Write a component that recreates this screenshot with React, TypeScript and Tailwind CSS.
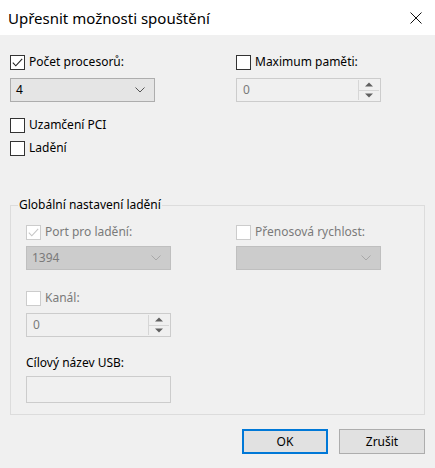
import React from "react";

function Check({ checked = false, disabled = false }: { checked?: boolean; disabled?: boolean }) {
  return (
    <span
      className={`w-[15px] h-[15px] border ${disabled ? "border-[#cccccc]" : "border-[#333333]"} bg-white flex items-center justify-center shrink-0`}
    >
      {checked && (
        <svg width="13" height="13" viewBox="0 0 13 13">
          <path d="M1.8 6.6 L4.8 9.8 L11.2 2.8" fill="none" stroke={disabled ? "#c6c6c6" : "#222222"} strokeWidth="1.1" />
        </svg>
      )}
    </span>
  );
}

function CheckRow({ label, checked = false, disabled = false }: { label: string; checked?: boolean; disabled?: boolean }) {
  return (
    <div className="flex items-center gap-[4px] h-[16px]">
      <Check checked={checked} disabled={disabled} />
      <span className={disabled ? "text-[#7a7a7a]" : "text-black"}>{label}</span>
    </div>
  );
}

function Chevron({ disabled = false }: { disabled?: boolean }) {
  return (
    <svg width="10" height="6" viewBox="0 0 10 6">
      <path d="M0.5 0.5 L5 5 L9.5 0.5" fill="none" stroke={disabled ? "#a8a8a8" : "#555555"} strokeWidth="1" />
    </svg>
  );
}

function Select({ value, disabled = false }: { value: string; disabled?: boolean }) {
  return (
    <div
      className={`w-[145px] h-[24px] border flex items-center justify-between pl-[5px] pr-[9px] ${
        disabled ? "bg-[#cccccc] border-[#bfbfbf] text-[#7a7a7a]" : "bg-[#e5e5e5] border-[#adadad] text-black"
      }`}
    >
      <span>{value}</span>
      <Chevron disabled={disabled} />
    </div>
  );
}

function Spin({ value }: { value: string }) {
  return (
    <div className="w-[145px] h-[24px] border border-[#cccccc] bg-[#f0f0f0] flex items-stretch">
      <span className="flex-1 flex items-center pl-[6px] text-[#7a7a7a]">{value}</span>
      <div className="w-[21px] flex flex-col border-l border-[#d6d6d6] my-[1px] mr-[1px]">
        <div className="flex-1 flex items-center justify-center border-b border-[#d6d6d6]">
          <svg width="8" height="5" viewBox="0 0 8 5">
            <path d="M0 4.5 L4 0.5 L8 4.5 Z" fill="#606060" />
          </svg>
        </div>
        <div className="flex-1 flex items-center justify-center">
          <svg width="8" height="5" viewBox="0 0 8 5">
            <path d="M0 0.5 L4 4.5 L8 0.5 Z" fill="#606060" />
          </svg>
        </div>
      </div>
    </div>
  );
}

export default function App() {
  return (
    <div className="w-[435px] h-[468px] bg-[#f0f0f0] font-['Noto_Sans',sans-serif] text-[12px] leading-[16px] text-black">
      <div className="h-[35px] bg-white flex items-center justify-between pl-[8px] pr-[13px]">
        <span className="text-[15px] leading-[20px]">Upřesnit možnosti spouštění</span>
        <svg width="12" height="12" viewBox="0 0 12 12">
          <path d="M0.5 0.5 L11.5 11.5 M11.5 0.5 L0.5 11.5" stroke="#111111" strokeWidth="1" fill="none" />
        </svg>
      </div>

      <div className="px-[10px] pt-[19px]">
        <div className="grid grid-cols-[226px_145px]">
          <div className="flex flex-col gap-[8px]">
            <CheckRow label="Počet procesorů:" checked />
            <Select value="4" />
          </div>
          <div className="flex flex-col gap-[8px]">
            <CheckRow label="Maximum paměti:" />
            <Spin value="0" />
          </div>
        </div>

        <div className="mt-[15px]">
          <CheckRow label="Uzamčení PCI" />
        </div>
        <div className="mt-[7px]">
          <CheckRow label="Ladění" />
        </div>

        <fieldset className="mt-[41px] border border-[#dcdcdc] pl-[7px] pr-[8px] pb-[11px]">
          <legend className="px-[1px]">Globální nastavení ladění</legend>
          <div className="pl-[8px] pt-[11px]">
            <div className="grid grid-cols-[210px_145px]">
              <div className="flex flex-col gap-[6px]">
                <CheckRow label="Port pro ladění:" checked disabled />
                <Select value="1394" disabled />
              </div>
              <div className="flex flex-col gap-[6px]">
                <CheckRow label="Přenosová rychlost:" disabled />
                <Select value="" disabled />
              </div>
            </div>
            <div className="mt-[20px] flex flex-col gap-[7px]">
              <CheckRow label="Kanál:" disabled />
              <Spin value="0" />
            </div>
            <div className="mt-[18px]">Cílový název USB:</div>
            <div className="mt-[5px] w-[145px] h-[27px] border border-[#cccccc] bg-[#f0f0f0]" />
          </div>
        </fieldset>

        <div className="mt-[14px] flex justify-end gap-[11px]">
          <button className="w-[86px] h-[25px] border-2 border-[#0078d7] bg-[#e1e1e1] flex items-center justify-center">
            OK
          </button>
          <button className="w-[86px] h-[25px] border border-[#adadad] bg-[#e1e1e1] flex items-center justify-center">
            Zrušit
          </button>
        </div>
      </div>
    </div>
  );
}
